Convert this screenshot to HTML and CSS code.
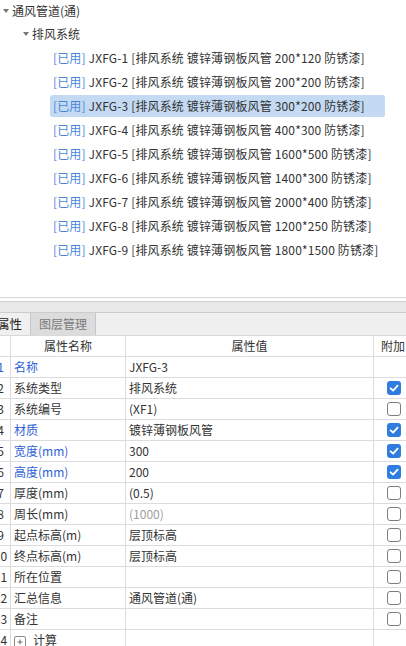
FILE: index.html
```html
<!DOCTYPE html>
<html lang="zh-CN">
<head>
<meta charset="utf-8">
<title>属性</title>
<link rel="stylesheet" href="styles.css">
</head>
<body>
<div class="tree">
  <div class="node lvl0"><span class="caret"></span><span>通风管道(通)</span></div>
  <div class="node lvl1"><span class="caret"></span><span>排风系统</span></div>
  <div class="items">
    <div class="item"><span class="used">[已用]</span> JXFG-1 [排风系统 镀锌薄钢板风管 200*120 防锈漆]</div>
    <div class="item"><span class="used">[已用]</span> JXFG-2 [排风系统 镀锌薄钢板风管 200*200 防锈漆]</div>
    <div class="item selected"><span class="used">[已用]</span> JXFG-3 [排风系统 镀锌薄钢板风管 300*200 防锈漆]</div>
    <div class="item"><span class="used">[已用]</span> JXFG-4 [排风系统 镀锌薄钢板风管 400*300 防锈漆]</div>
    <div class="item"><span class="used">[已用]</span> JXFG-5 [排风系统 镀锌薄钢板风管 1600*500 防锈漆]</div>
    <div class="item"><span class="used">[已用]</span> JXFG-6 [排风系统 镀锌薄钢板风管 1400*300 防锈漆]</div>
    <div class="item"><span class="used">[已用]</span> JXFG-7 [排风系统 镀锌薄钢板风管 2000*400 防锈漆]</div>
    <div class="item"><span class="used">[已用]</span> JXFG-8 [排风系统 镀锌薄钢板风管 1200*250 防锈漆]</div>
    <div class="item"><span class="used">[已用]</span> JXFG-9 [排风系统 镀锌薄钢板风管 1800*1500 防锈漆]</div>
  </div>
</div>

<div class="divider"></div>
<div class="band"></div>
<div class="tabs">
  <div class="tab active">属性</div>
  <div class="tab">图层管理</div>
</div>

<div class="grid">
  <div class="row head">
    <div class="c idx"></div>
    <div class="c name center">属性名称</div>
    <div class="c val center">属性值</div>
    <div class="c extra">附加</div>
  </div>
  <div class="row">
    <div class="c idx blue">1</div>
    <div class="c name blue">名称</div>
    <div class="c val">JXFG-3</div>
    <div class="c extra"></div>
  </div>
  <div class="row">
    <div class="c idx">2</div>
    <div class="c name">系统类型</div>
    <div class="c val">排风系统</div>
    <div class="c extra"><span class="cb on"><svg viewBox="0 0 14 14"><path d="M3.6 7.3 L6.1 9.6 L10.6 4.6"/></svg></span></div>
  </div>
  <div class="row">
    <div class="c idx">3</div>
    <div class="c name">系统编号</div>
    <div class="c val">(XF1)</div>
    <div class="c extra"><span class="cb"></span></div>
  </div>
  <div class="row">
    <div class="c idx">4</div>
    <div class="c name blue">材质</div>
    <div class="c val">镀锌薄钢板风管</div>
    <div class="c extra"><span class="cb on"><svg viewBox="0 0 14 14"><path d="M3.6 7.3 L6.1 9.6 L10.6 4.6"/></svg></span></div>
  </div>
  <div class="row">
    <div class="c idx">5</div>
    <div class="c name blue">宽度(mm)</div>
    <div class="c val">300</div>
    <div class="c extra"><span class="cb on"><svg viewBox="0 0 14 14"><path d="M3.6 7.3 L6.1 9.6 L10.6 4.6"/></svg></span></div>
  </div>
  <div class="row">
    <div class="c idx">6</div>
    <div class="c name blue">高度(mm)</div>
    <div class="c val">200</div>
    <div class="c extra"><span class="cb on"><svg viewBox="0 0 14 14"><path d="M3.6 7.3 L6.1 9.6 L10.6 4.6"/></svg></span></div>
  </div>
  <div class="row">
    <div class="c idx">7</div>
    <div class="c name">厚度(mm)</div>
    <div class="c val">(0.5)</div>
    <div class="c extra"><span class="cb"></span></div>
  </div>
  <div class="row">
    <div class="c idx">8</div>
    <div class="c name">周长(mm)</div>
    <div class="c val gray">(1000)</div>
    <div class="c extra"><span class="cb"></span></div>
  </div>
  <div class="row">
    <div class="c idx">9</div>
    <div class="c name">起点标高(m)</div>
    <div class="c val">层顶标高</div>
    <div class="c extra"><span class="cb"></span></div>
  </div>
  <div class="row">
    <div class="c idx">10</div>
    <div class="c name">终点标高(m)</div>
    <div class="c val">层顶标高</div>
    <div class="c extra"><span class="cb"></span></div>
  </div>
  <div class="row">
    <div class="c idx">11</div>
    <div class="c name">所在位置</div>
    <div class="c val"></div>
    <div class="c extra"><span class="cb"></span></div>
  </div>
  <div class="row">
    <div class="c idx">12</div>
    <div class="c name">汇总信息</div>
    <div class="c val">通风管道(通)</div>
    <div class="c extra"><span class="cb"></span></div>
  </div>
  <div class="row">
    <div class="c idx">13</div>
    <div class="c name">备注</div>
    <div class="c val"></div>
    <div class="c extra"><span class="cb"></span></div>
  </div>
  <div class="row">
    <div class="c idx">14</div>
    <div class="c name"><span class="plus"><svg viewBox="0 0 12 12"><path d="M3 6 H9 M6 3 V9"/></svg></span>计算</div>
    <div class="c val"></div>
    <div class="c extra"></div>
  </div>
</div>
</body>
</html>
```

FILE: styles.css
```css
* { box-sizing: border-box; }
html, body {
  margin: 0;
  padding: 0;
  background: #ffffff;
  overflow: hidden;
}
body {
  width: 406px;
  height: 646px;
  font-family: "Noto Sans CJK SC", "Microsoft YaHei", sans-serif;
  font-size: 12px;
  color: #333333;
}

/* ---------- tree ---------- */
.tree {
  height: 298px;
  margin-top: -1px;
}
.node {
  display: flex;
  align-items: center;
  height: 24px;
  line-height: 24px;
  white-space: nowrap;
}
.node.lvl0 { height: 23px; padding-left: 3px; }
.node.lvl1 { padding-left: 23px; }
.caret {
  width: 0;
  height: 0;
  border-top: 4px solid #777777;
  border-left: 3px solid transparent;
  border-right: 3px solid transparent;
  margin-right: 3px;
}
.items {
  padding-left: 50px;
}
.item {
  width: 335px;
  height: 24px;
  line-height: 22px;
  padding-left: 3px;
  white-space: nowrap;
  border-top: 1px solid transparent;
  border-bottom: 1px solid transparent;
  background-clip: padding-box;
  border-radius: 3px;
  letter-spacing: 0.15px;
}
.item.selected { background-color: #c4daf2; }
.used { color: #4a86d8; }

/* ---------- separators and tabs ---------- */
.divider {
  height: 4px;
  border-top: 1px solid #d6d6d6;
}
.band {
  height: 12px;
  background: #e8e8e8;
  border-top: 1px solid #d2d2d2;
  border-bottom: 1px solid #cdcdcd;
}
.tabs {
  display: flex;
  height: 22px;
  background: #f0f0f0;
}
.tab {
  height: 22px;
  line-height: 22px;
  white-space: nowrap;
}
.tab.active {
  width: 34px;
  margin-left: -4px;
  padding-left: 1px;
  color: #222222;
  font-size: 12.5px;
}
.tab:not(.active) {
  width: 66px;
  text-align: center;
  background: #dcdcdc;
  color: #7a7a7a;
  border-left: 1px solid #c6c6c6;
  border-right: 1px solid #c6c6c6;
}

/* ---------- property grid ---------- */
.grid {
  margin-left: -10px;
  width: 450px;
  border-top: 1px solid #d9d9d9;
}
.row {
  display: grid;
  grid-template-columns: 21px 115px 248px 60px;
  height: 21px;
  border-bottom: 1px solid #dcdcdc;
}
.c {
  height: 20px;
  line-height: 20px;
  white-space: nowrap;
  overflow: hidden;
  border-right: 1px solid #dcdcdc;
}
.c.idx { text-align: center; padding-left: 1px; }
.c.name { padding-left: 3px; display: flex; align-items: center; }
.c.val { padding-left: 3px; }
.c.extra { padding-left: 6px; border-right: none; display: flex; align-items: center; }
.c.center { justify-content: center; text-align: center; padding-left: 0; }
.row.head .c.extra { padding-left: 7px; }
.blue { color: #2f62d6; }
.gray { color: #a0a0a0; }

.cb {
  display: block;
  width: 14px;
  height: 14px;
  margin-left: 7px;
  border: 1px solid #7e7e7e;
  border-radius: 3px;
  background: #ffffff;
}
.cb.on {
  border: none;
  background: #2f7de1;
}
.cb svg { display: block; width: 14px; height: 14px; }
.cb svg path {
  fill: none;
  stroke: #ffffff;
  stroke-width: 1.8;
  stroke-linecap: round;
  stroke-linejoin: round;
}
.plus {
  display: block;
  width: 12px;
  height: 12px;
  border: 1px solid #8a8a8a;
  border-radius: 2px;
  margin-right: 7px;
  margin-top: 3px;
}
.plus svg { display: block; width: 10px; height: 10px; }
.plus svg path { stroke: #555555; stroke-width: 1; fill: none; }
```
